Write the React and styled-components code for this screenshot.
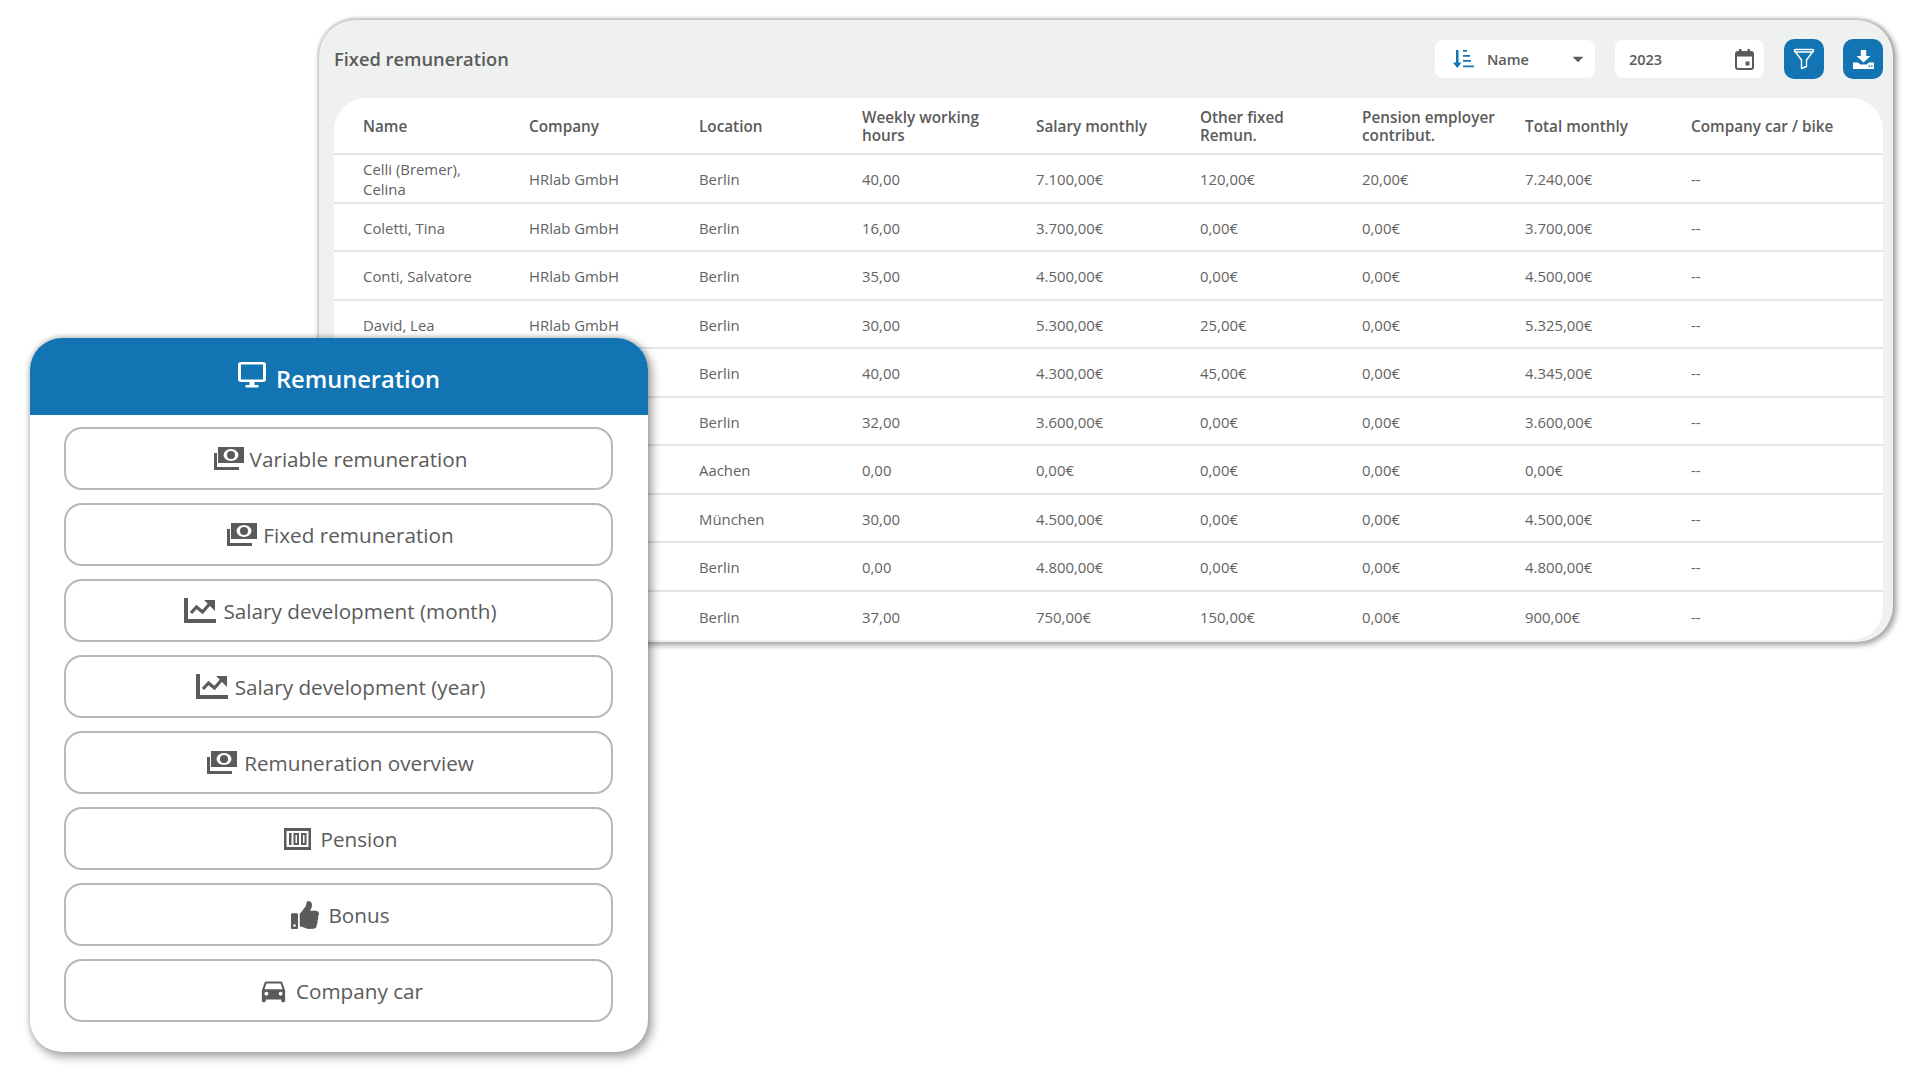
import React from 'react';
import styled, { createGlobalStyle } from 'styled-components';
import { FaThumbsUp } from 'react-icons/fa';
import { MdArrowDropDown, MdDirectionsCar } from 'react-icons/md';

const GlobalStyle = createGlobalStyle`
  html, body { margin: 0; padding: 0; background: #fff; }
  body { font-family: "Open Sans", "Noto Sans", sans-serif; color: #5b5b5b; }
  * { box-sizing: border-box; }
`;

const columns = [
    'Name', 'Company', 'Location', 'Weekly working\nhours', 'Salary monthly',
    'Other fixed\nRemun.', 'Pension employer\ncontribut.', 'Total monthly', 'Company car / bike',
];

// rows behind the menu card have no visible name/company
const rows = [
    ['Celli (Bremer), Celina', 'HRlab GmbH', 'Berlin', '40,00', '7.100,00€', '120,00€', '20,00€', '7.240,00€', '--'],
    ['Coletti, Tina', 'HRlab GmbH', 'Berlin', '16,00', '3.700,00€', '0,00€', '0,00€', '3.700,00€', '--'],
    ['Conti, Salvatore', 'HRlab GmbH', 'Berlin', '35,00', '4.500,00€', '0,00€', '0,00€', '4.500,00€', '--'],
    ['David, Lea', 'HRlab GmbH', 'Berlin', '30,00', '5.300,00€', '25,00€', '0,00€', '5.325,00€', '--'],
    ['', '', 'Berlin', '40,00', '4.300,00€', '45,00€', '0,00€', '4.345,00€', '--'],
    ['', '', 'Berlin', '32,00', '3.600,00€', '0,00€', '0,00€', '3.600,00€', '--'],
    ['', '', 'Aachen', '0,00', '0,00€', '0,00€', '0,00€', '0,00€', '--'],
    ['', '', 'München', '30,00', '4.500,00€', '0,00€', '0,00€', '4.500,00€', '--'],
    ['', '', 'Berlin', '0,00', '4.800,00€', '0,00€', '0,00€', '4.800,00€', '--'],
    ['', '', 'Berlin', '37,00', '750,00€', '150,00€', '0,00€', '900,00€', '--'],
];

const MoneyIcon = () => (
    <svg width="30" height="23" viewBox="0 0 30 23" fill="#5b5b5b">
        <path d="M4 0h26v16H4z" />
        <ellipse cx="17" cy="8" rx="7.500" ry="6" fill="#fff" />
        <circle cx="17" cy="8" r="4" />
        <path d="M0 6h3v14h22v3H0z" />
    </svg>
);

const ChartIcon = () => (
    <svg width="32" height="25" viewBox="0 0 32 25" fill="#5b5b5b">
        <path d="M0 0h4v21h28v4H0z" />
        <path d="M7 15l5.500-6 6 5 7-8" fill="none" stroke="#5b5b5b" strokeWidth="3.200" />
        <path d="M20 2h11v11z" />
    </svg>
);

const PensionIcon = () => (
    <svg width="27" height="22" viewBox="0 0 27 22" fill="#5b5b5b">
        <path fillRule="evenodd" d="M0 0h27v22H0z M2.500 3v16h22V3z" />
        <path fillRule="evenodd" d="M5 5h2.500v12H5z M9.500 5h5.500v12H9.500z M11.500 7v8H13V7z M17 5h5.500v12H17z M19 7v8h1.500V7z" />
    </svg>
);

const MonitorIcon = () => (
    <svg width="28" height="26" viewBox="0 0 28 26" fill="#fff">
        <path fillRule="evenodd" d="M3 0h22a3 3 0 0 1 3 3v14a3 3 0 0 1-3 3H3a3 3 0 0 1-3-3V3a3 3 0 0 1 3-3z M3 2.500v15h22v-15z" />
        <path d="M11.500 20h5v3h4v2.500h-13V23h4z" />
    </svg>
);

const SortIcon = () => (
    <svg width="21" height="18" viewBox="0 0 21 18" fill="#1274b3">
        <path d="M3 0h2.500v12.500H8.500L4.250 18 0 12.500h3z" />
        <path d="M10 0h4v1.800h-4zM10 5h7v1.800h-7zM10 10h8v1.800h-8zM10 15.500h11v1.800H10z" />
    </svg>
);

const FunnelIcon = () => (
    <svg width="22" height="22" viewBox="0 0 22 22" fill="none" stroke="#fff" strokeWidth="1.400" strokeLinejoin="round">
        <rect x="1.500" y="1.500" width="19" height="2.500" rx="1" />
        <path d="M2.500 4L8.500 12V20.500L13.500 18.500V12L19.500 4" />
    </svg>
);

const DownloadIcon = () => (
    <svg width="21" height="19" viewBox="0 0 21 19" fill="#fff">
        <path d="M7.800 0h5.400v6h4.300L10.500 12.500 3.500 6h4.300z" />
        <path fillRule="evenodd" d="M0 12.500h5l2.500 2h6l2.500-2h5V19H0z M15.500 15.500V17H17v-1.500z M18 15.500V17h1.500v-1.500z" />
    </svg>
);

const CalendarIcon = () => (
    <svg width="19" height="21" viewBox="0 0 19 21" fill="#5b5b5b">
        <path fillRule="evenodd" d="M3 2h1V0h2.500v2h6V0H15v2h1a3 3 0 0 1 3 3v13a3 3 0 0 1-3 3H3a3 3 0 0 1-3-3V5a3 3 0 0 1 3-3z M2 7.500V18a1 1 0 0 0 1 1h13a1 1 0 0 0 1-1V7.500z" />
        <path d="M10.500 12.500h4v4h-4z" />
    </svg>
);

const menu = [
    { label: 'Variable remuneration', icon: <MoneyIcon />, gap: 6 },
    { label: 'Fixed remuneration', icon: <MoneyIcon />, gap: 6 },
    { label: 'Salary development (month)', icon: <ChartIcon />, gap: 7 },
    { label: 'Salary development (year)', icon: <ChartIcon />, gap: 7 },
    { label: 'Remuneration overview', icon: <MoneyIcon />, gap: 7 },
    { label: 'Pension', icon: <PensionIcon />, gap: 10 },
    { label: 'Bonus', icon: <FaThumbsUp size={28} color="#5b5b5b" />, gap: 9 },
    { label: 'Company car', icon: <MdDirectionsCar size={31} color="#5b5b5b" />, gap: 7 },
];

export default function App() {
    return (
        <Canvas>
            <GlobalStyle />
            <TablePanel>
                <Toolbar>
                    <Title>Fixed remuneration</Title>
                    <Select>
                        <SortIcon />
                        <SelectText>Name</SelectText>
                        <MdArrowDropDown size={26} color="#5b5b5b" />
                    </Select>
                    <DateField>
                        <span>2023</span>
                        <CalendarIcon />
                    </DateField>
                    <IconButton><FunnelIcon /></IconButton>
                    <IconButton><DownloadIcon /></IconButton>
                </Toolbar>
                <Table>
                    <HeadRow>
                        {columns.map((c) => <HeadCell key={c}>{c}</HeadCell>)}
                    </HeadRow>
                    {rows.map((row, i) => (
                        <Row key={i} $last={i === rows.length - 1}>
                            {row.map((v, j) => <Cell key={j}>{v}</Cell>)}
                        </Row>
                    ))}
                </Table>
            </TablePanel>

            <MenuCard>
                <MenuHeader>
                    <MonitorIcon />
                    <HeaderLabel>Remuneration</HeaderLabel>
                </MenuHeader>
                <MenuList>
                    {menu.map((m) => (
                        <MenuButton key={m.label} $gap={m.gap}>
                            {m.icon}
                            <span>{m.label}</span>
                        </MenuButton>
                    ))}
                </MenuList>
            </MenuCard>
        </Canvas>
    );
}

const gridCols = '195px 170px 163px 174px 164px 162px 163px 166px 1fr';

const Canvas = styled.div`
  position: relative;
  width: 1920px;
  height: 1080px;
  padding: 20px 0 0 319px;
  overflow: hidden;
`;

const TablePanel = styled.section`
  width: 1574px;
  height: 622px;
  padding: 0 10px 0 15px;
  background: #eff1f1;
  border-radius: 36px;
  box-shadow: 0 -1px 3px 1px rgba(0, 0, 0, 0.14), 2px 2px 5px 2px rgba(0, 0, 0, 0.3);
`;

const Toolbar = styled.header`
  display: flex;
  align-items: center;
  height: 78px;
`;

const Title = styled.h2`
  margin: -2px auto 0 0;
  font-size: 18.300px;
  font-weight: 600;
  color: #5b5b5b;
`;

const Select = styled.div`
  display: flex;
  align-items: center;
  width: 160px;
  height: 38px;
  padding: 0 4px 0 18px;
  margin-right: 20px;
  background: #fff;
  border-radius: 8px;
  font-size: 14.500px;
  font-weight: 600;
`;

const SelectText = styled.span`
  flex: 1;
  margin-left: 13px;
`;

const DateField = styled.div`
  display: flex;
  align-items: center;
  justify-content: space-between;
  width: 149px;
  height: 38px;
  padding: 0 10px 0 14px;
  margin-right: 20px;
  background: #fff;
  border-radius: 8px;
  font-size: 14.500px;
  font-weight: 600;
`;

const IconButton = styled.div`
  display: flex;
  align-items: center;
  justify-content: center;
  width: 40px;
  height: 40px;
  background: #1274b3;
  border-radius: 10px;
  & + & { margin-left: 19px; }
`;

const Table = styled.div`
  height: 542px;
  background: #fff;
  border-radius: 32px;
  overflow: hidden;
`;

const HeadRow = styled.div`
  display: grid;
  grid-template-columns: ${gridCols};
  align-items: center;
  height: 57px;
  border-bottom: 2px solid #e4e4e4;
`;

const HeadCell = styled.div`
  font-size: 15.300px;
  line-height: 18px;
  font-weight: 600;
  white-space: pre-line;
  color: #5b5b5b;
  &:first-child { padding-left: 29px; }
`;

const Row = styled.div`
  display: grid;
  grid-template-columns: ${gridCols};
  align-items: center;
  height: 48.500px;
  padding-top: 2px;
  border-bottom: ${(p) => (p.$last ? 'none' : '2px solid #e4e4e4')};
`;

const Cell = styled.div`
  padding-right: 12px;
  font-size: 14.900px;
  line-height: 20px;
  color: #636363;
  &:first-child { padding-left: 29px; padding-right: 40px; }
`;

const MenuCard = styled.aside`
  position: absolute;
  left: 30px;
  top: 338px;
  width: 618px;
  height: 714px;
  background: #fff;
  border-radius: 32px;
  box-shadow: 0 -1px 4px 1px rgba(0, 0, 0, 0.14), 3px 4px 8px 2px rgba(0, 0, 0, 0.3);
  overflow: hidden;
`;

const MenuHeader = styled.header`
  display: flex;
  align-items: center;
  justify-content: center;
  gap: 10px;
  height: 77px;
  background: #1274b3;
  color: #fff;
  font-size: 23.600px;
  font-weight: 600;
  svg { margin-top: -4px; }
`;

const HeaderLabel = styled.span`
  margin-top: 5px;
`;

const MenuList = styled.div`
  display: flex;
  flex-direction: column;
  gap: 13px;
  padding: 12px 35px 0 34px;
`;

const MenuButton = styled.div`
  display: flex;
  align-items: center;
  justify-content: center;
  gap: ${(p) => p.$gap}px;
  height: 63px;
  padding-left: 4px;
  border: 2px solid #b8b8b8;
  border-radius: 18px;
  font-size: 20.700px;
  color: #5b5b5b;
`;
